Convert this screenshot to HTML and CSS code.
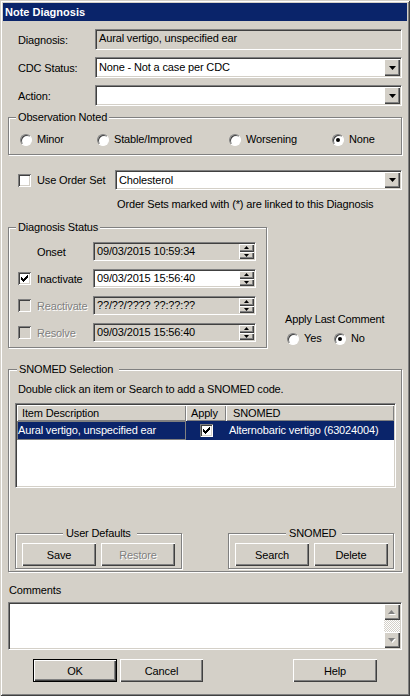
FILE: index.html
```html
<!DOCTYPE html>
<html>
<head>
<meta charset="utf-8">
<title>Note Diagnosis</title>
<link rel="stylesheet" href="styles.css">
</head>
<body>
<div class="window">
  <div class="titlebar">Note Diagnosis</div>
  <div class="content">
    <div class="form-row row-first">
      <span class="lbl">Diagnosis:</span>
      <div class="field sunken ro">Aural vertigo, unspecified ear</div>
    </div>
    <div class="form-row">
      <span class="lbl">CDC Status:</span>
      <div class="combo sunken">
        <span class="combo-text">None - Not a case per CDC</span>
        <span class="drop raised"><svg width="7" height="4" viewBox="0 0 7 4"><path d="M0 0h7L3.5 4z" fill="#000"/></svg></span>
      </div>
    </div>
    <div class="form-row">
      <span class="lbl">Action:</span>
      <div class="combo sunken">
        <span class="combo-text"></span>
        <span class="drop raised"><svg width="7" height="4" viewBox="0 0 7 4"><path d="M0 0h7L3.5 4z" fill="#000"/></svg></span>
      </div>
    </div>

    <div class="group obs">
      <span class="legend">Observation Noted</span>
      <div class="radio-row">
        <div class="radio-item w-minor"><span class="radio"></span>Minor</div>
        <div class="radio-item w-stable"><span class="radio"></span>Stable/Improved</div>
        <div class="radio-item w-worse"><span class="radio"></span>Worsening</div>
        <div class="radio-item"><span class="radio on"></span>None</div>
      </div>
    </div>

    <div class="order-row">
      <div class="chk-label"><span class="chk"></span>Use Order Set</div>
      <div class="combo sunken short">
        <span class="combo-text">Cholesterol</span>
        <span class="drop raised"><svg width="7" height="4" viewBox="0 0 7 4"><path d="M0 0h7L3.5 4z" fill="#000"/></svg></span>
      </div>
    </div>
    <div class="note">Order Sets marked with (*) are linked to this Diagnosis</div>

    <div class="status-area">
      <div class="group status">
        <span class="legend">Diagnosis Status</span>
        <div class="st-row first">
          <div class="st-label"><span class="st-text-only">Onset</span></div>
          <div class="date sunken ro"><span class="date-text">09/03/2015 10:59:34</span>
            <span class="spin"><span class="spin-btn raised"><svg width="5" height="3" viewBox="0 0 5 3"><path d="M2.5 0L5 3H0z" fill="#000"/></svg></span><span class="spin-btn raised"><svg width="5" height="3" viewBox="0 0 5 3"><path d="M0 0h5L2.5 3z" fill="#000"/></svg></span></span>
          </div>
        </div>
        <div class="st-row">
          <div class="st-label"><span class="chk"><svg width="13" height="13" viewBox="0 0 13 13"><path d="M3 5h1v3H3zM4 6h1v3H4zM5 7h1v3H5zM6 6h1v3H6zM7 5h1v3H7zM8 4h1v3H8zM9 3h1v3H9z" fill="#000"/></svg></span>Inactivate</div>
          <div class="date sunken"><span class="date-text">09/03/2015 15:56:40</span>
            <span class="spin"><span class="spin-btn raised"><svg width="5" height="3" viewBox="0 0 5 3"><path d="M2.5 0L5 3H0z" fill="#000"/></svg></span><span class="spin-btn raised"><svg width="5" height="3" viewBox="0 0 5 3"><path d="M0 0h5L2.5 3z" fill="#000"/></svg></span></span>
          </div>
        </div>
        <div class="st-row">
          <div class="st-label dis"><span class="chk disabled"></span>Reactivate</div>
          <div class="date sunken ro"><span class="date-text">??/??/???? ??:??:??</span>
            <span class="spin"><span class="spin-btn raised"><svg width="5" height="3" viewBox="0 0 5 3"><path d="M2.5 0L5 3H0z" fill="#000"/></svg></span><span class="spin-btn raised"><svg width="5" height="3" viewBox="0 0 5 3"><path d="M0 0h5L2.5 3z" fill="#000"/></svg></span></span>
          </div>
        </div>
        <div class="st-row">
          <div class="st-label dis"><span class="chk disabled"></span>Resolve</div>
          <div class="date sunken ro"><span class="date-text">09/03/2015 15:56:40</span>
            <span class="spin"><span class="spin-btn raised"><svg width="5" height="3" viewBox="0 0 5 3"><path d="M2.5 0L5 3H0z" fill="#000"/></svg></span><span class="spin-btn raised"><svg width="5" height="3" viewBox="0 0 5 3"><path d="M0 0h5L2.5 3z" fill="#000"/></svg></span></span>
          </div>
        </div>
      </div>
      <div class="apply">
        <div class="apply-title">Apply Last Comment</div>
        <div class="apply-radios">
          <div class="radio-item w-yes"><span class="radio"></span>Yes</div>
          <div class="radio-item"><span class="radio on"></span>No</div>
        </div>
      </div>
    </div>

    <div class="group snomed">
      <span class="legend wide">SNOMED Selection</span>
      <div class="instr">Double click an item or Search to add a SNOMED code.</div>
      <div class="list sunken">
        <div class="list-head">
          <div class="hcell c1">Item Description</div>
          <div class="hcell c2">Apply</div>
          <div class="hcell c3">SNOMED</div>
        </div>
        <div class="list-row">
          <div class="cell c1 focus">Aural vertigo, unspecified ear</div>
          <div class="cell c2"><span class="chk"><svg width="13" height="13" viewBox="0 0 13 13"><path d="M3 5h1v3H3zM4 6h1v3H4zM5 7h1v3H5zM6 6h1v3H6zM7 5h1v3H7zM8 4h1v3H8zM9 3h1v3H9z" fill="#000"/></svg></span></div>
          <div class="cell c3">Alternobaric vertigo (63024004)</div>
        </div>
      </div>
      <div class="subgroups">
        <div class="group sub user">
          <span class="legend center-user">User Defaults</span>
          <div class="sub-btns">
            <button class="btn raised">Save</button>
            <button class="btn raised dis">Restore</button>
          </div>
        </div>
        <div class="group sub code">
          <span class="legend center-code">SNOMED</span>
          <div class="sub-btns">
            <button class="btn raised">Search</button>
            <button class="btn raised">Delete</button>
          </div>
        </div>
      </div>
    </div>

    <div class="comments-label">Comments</div>
    <div class="memo sunken">
      <div class="vscroll">
        <span class="sb-btn raised"><svg width="8" height="5" viewBox="0 0 8 5"><path d="M4.5 1L8 5H1z" fill="#fff"/><path d="M3.5 0L7 4H0z" fill="#808080"/></svg></span>
        <span class="sb-track"></span>
        <span class="sb-btn raised"><svg width="8" height="5" viewBox="0 0 8 5"><path d="M1 1h7L4.5 5z" fill="#fff"/><path d="M0 0h7L3.5 4z" fill="#808080"/></svg></span>
      </div>
    </div>

    <div class="bottom-btns">
      <button class="btn raised default ok">OK</button>
      <button class="btn raised cancel">Cancel</button>
      <button class="btn raised help">Help</button>
    </div>
  </div>
</div>
</body>
</html>
```

FILE: styles.css
```css
html, body {
  margin: 0;
  padding: 0;
}
body {
  width: 410px;
  height: 696px;
  background: #d4d0c8;
  font-family: "Liberation Sans", Arial, sans-serif;
  font-size: 11px;
  letter-spacing: -0.15px;
  color: #000;
}
.window {
  width: 410px;
  height: 696px;
  box-sizing: border-box;
  padding: 3px;
  background: #d4d0c8;
  box-shadow: inset 1px 1px #d4d0c8, inset -1px -1px #404040, inset 2px 2px #fff, inset -2px -2px #808080;
}
.titlebar {
  height: 18px;
  line-height: 18px;
  background: #0a246a;
  color: #fff;
  font-weight: bold;
  letter-spacing: 0;
  padding-left: 2px;
}
.content {
  padding: 0 5px;
}

/* 3D borders */
.sunken {
  box-sizing: border-box;
  border: 1px solid;
  border-color: #808080 #fff #fff #808080;
  box-shadow: inset 1px 1px #404040, inset -1px -1px #d4d0c8;
  background: #fff;
}
.sunken.ro {
  background: #d4d0c8;
}
.raised {
  box-sizing: border-box;
  background: #d4d0c8;
  box-shadow: inset 1px 1px #fff, inset -1px -1px #404040, inset -2px -2px #808080;
}

/* rows */
.form-row {
  display: flex;
  align-items: center;
  height: 21px;
  margin-top: 7px;
  padding-left: 10px;
}
.form-row.row-first {
  margin-top: 8px;
}
.lbl {
  width: 77px;
  flex: none;
}
.field {
  flex: 1;
  height: 21px;
  padding: 0 3px;
  line-height: 17px;
  white-space: nowrap;
}
.combo {
  flex: 1;
  height: 21px;
  display: flex;
  align-items: stretch;
  padding: 1px;
}
.combo.short {
  height: 20px;
}
.combo-text {
  flex: 1;
  padding-left: 2px;
  line-height: 17px;
  white-space: nowrap;
}
.combo.short .combo-text {
  line-height: 16px;
}
.drop {
  width: 16px;
  flex: none;
  display: flex;
  align-items: center;
  justify-content: center;
}
.drop svg {
  display: block;
}

/* group boxes */
.group {
  position: relative;
  box-sizing: border-box;
  border: 1px solid #808080;
  box-shadow: inset 1px 1px #fff, 1px 1px #fff;
}
.legend {
  position: absolute;
  top: -7px;
  left: 7px;
  padding: 0 2px;
  line-height: 13px;
  background: #d4d0c8;
  white-space: nowrap;
}
.legend.wide {
  left: 8px;
  padding: 0 6px 0 2px;
}
.legend.center-user {
  left: 47px;
  padding: 0 6px 0 3px;
}
.legend.center-code {
  left: 57px;
  padding: 0 6px 0 3px;
}

/* observation */
.obs {
  margin-top: 11px;
  height: 38px;
}
.radio-row {
  display: flex;
  margin-top: 15px;
  padding-left: 11px;
  height: 13px;
  align-items: center;
}
.radio-item {
  display: flex;
  align-items: center;
  gap: 5px;
  line-height: 13px;
  white-space: nowrap;
}
.w-minor { width: 77px; }
.w-stable { width: 132px; }
.w-worse { width: 103px; }
.w-yes { width: 47px; }
.radio {
  position: relative;
  width: 12px;
  height: 12px;
  box-sizing: border-box;
  border-radius: 50%;
  background: #fff;
  border: 1px solid;
  border-color: #808080 #fff #fff #808080;
  box-shadow: inset 1px 1px #404040;
  flex: none;
}
.radio.on::after {
  content: "";
  position: absolute;
  left: 3px;
  top: 3px;
  width: 4px;
  height: 4px;
  border-radius: 50%;
  background: #000;
}

/* checkbox */
.chk {
  display: inline-block;
  width: 13px;
  height: 13px;
  flex: none;
  box-sizing: border-box;
  background: #fff;
  box-shadow: inset 1px 1px #808080, inset -1px -1px #fff, inset 2px 2px #404040, inset -2px -2px #d4d0c8;
}
.chk svg {
  display: block;
}
.chk.disabled {
  background: #d4d0c8;
}

/* order set */
.order-row {
  display: flex;
  align-items: center;
  height: 20px;
  margin-top: 15px;
  padding-left: 10px;
}
.chk-label {
  width: 97px;
  flex: none;
  display: flex;
  align-items: center;
  gap: 6px;
}
.note {
  margin-top: 8px;
  padding-left: 109px;
  line-height: 13px;
}

/* diagnosis status */
.status-area {
  display: flex;
  margin-top: 16px;
}
.status {
  width: 259px;
  height: 121px;
  flex: none;
}
.st-row {
  display: flex;
  align-items: center;
  height: 19px;
  margin-top: 8px;
  padding-left: 9px;
}
.st-row.first {
  margin-top: 14px;
}
.st-label {
  width: 75px;
  flex: none;
  display: flex;
  align-items: center;
  gap: 6px;
  white-space: nowrap;
}
.st-text-only {
  padding-left: 19px;
}
.dis {
  color: #808080;
  text-shadow: 1px 1px #fff;
}
.date {
  width: 163px;
  height: 19px;
  display: flex;
  padding: 1px;
}
.date-text {
  flex: 1;
  padding-left: 2px;
  line-height: 15px;
  white-space: nowrap;
}
.spin {
  width: 15px;
  display: flex;
  flex-direction: column;
}
.spin-btn {
  flex: 1;
  display: flex;
  align-items: center;
  justify-content: center;
}
.spin-btn svg {
  display: block;
}
.apply {
  margin-left: 18px;
  margin-top: 86px;
}
.apply-title {
  line-height: 13px;
  white-space: nowrap;
}
.apply-radios {
  display: flex;
  margin-top: 6px;
  padding-left: 2px;
}

/* snomed */
.snomed {
  margin-top: 21px;
  height: 203px;
}
.instr {
  margin-top: 13px;
  padding-left: 9px;
  line-height: 13px;
  white-space: nowrap;
}
.list {
  margin: 7px 5px 0 6px;
  height: 85px;
  padding: 1px;
}
.list-head {
  display: flex;
  height: 16px;
}
.hcell {
  box-sizing: border-box;
  background: #d4d0c8;
  box-shadow: inset 1px 1px #fff, inset -1px -1px #808080;
  line-height: 16px;
  padding-left: 5px;
  white-space: nowrap;
}
.c1 { width: 169px; flex: none; }
.c2 { width: 40px; flex: none; }
.c3 { flex: 1; }
.hcell.c3 { padding-left: 7px; }
.list-row {
  display: flex;
  height: 19px;
  background: #0a246a;
  color: #fff;
  line-height: 19px;
}
.cell {
  box-sizing: border-box;
  white-space: nowrap;
}
.cell.focus {
  box-shadow: inset 0 0 0 1px #808080;
  padding-left: 1px;
}
.cell.c2 {
  display: flex;
  align-items: center;
  padding-left: 14px;
}
.cell.c3 {
  padding-left: 3px;
}
.subgroups {
  display: flex;
  margin-top: 45px;
  padding-left: 6px;
}
.sub {
  height: 36px;
}
.sub.user {
  width: 167px;
}
.sub.code {
  width: 166px;
  margin-left: 46px;
}
.sub-btns {
  display: flex;
  gap: 5px;
  padding: 9px 0 0 6px;
}
.btn {
  width: 74px;
  height: 23px;
  border: 0;
  margin: 0;
  padding: 0;
  font-family: inherit;
  font-size: 11px;
  letter-spacing: -0.15px;
  color: #000;
}
.btn.dis {
  color: #808080;
}

/* comments */
.comments-label {
  margin-top: 12px;
  padding-left: 1px;
  line-height: 13px;
}
.memo {
  margin-top: 5px;
  height: 48px;
  display: flex;
  justify-content: flex-end;
  padding: 1px;
}
.vscroll {
  width: 16px;
  display: flex;
  flex-direction: column;
}
.sb-btn {
  height: 16px;
  flex: none;
  display: flex;
  align-items: center;
  justify-content: center;
}
.sb-btn svg {
  display: block;
}
.sb-track {
  flex: 1;
  background: repeating-conic-gradient(#fff 0 25%, #d4d0c8 0 50%) 0 0 / 2px 2px;
}

/* bottom buttons */
.bottom-btns {
  display: flex;
  margin-top: 9px;
}
.btn.ok {
  width: 84px;
  margin-left: 25px;
}
.btn.default {
  border: 1px solid #000;
}
.btn.cancel {
  width: 83px;
  margin-left: 3px;
}
.btn.help {
  width: 84px;
  margin-left: 90px;
}
```
